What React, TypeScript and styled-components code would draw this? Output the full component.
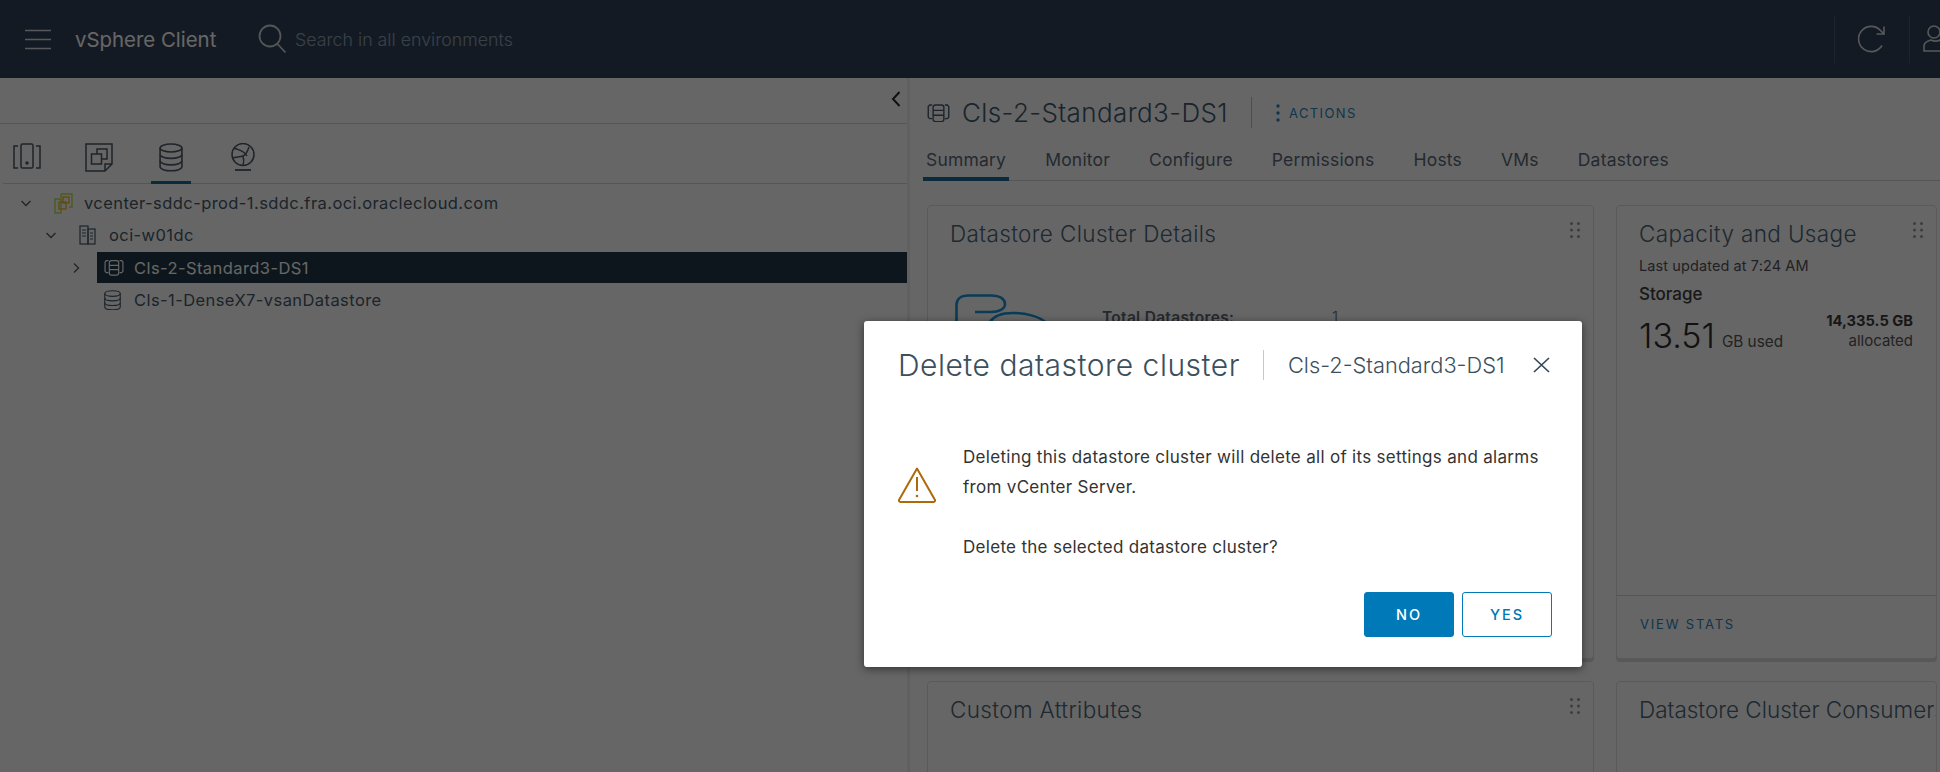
import styled, { createGlobalStyle } from 'styled-components';

const font = `Inter, "Open Sans", "Liberation Sans", sans-serif`;

const GlobalStyle = createGlobalStyle`
  html, body {
    margin: 0;
    width: 1940px;
    height: 772px;
    overflow: hidden;
    background: #fff;
    font-family: ${font};
  }
  * { box-sizing: border-box; }
  svg { flex-shrink: 0; }
`;

const TABS = ['Summary', 'Monitor', 'Configure', 'Permissions', 'Hosts', 'VMs', 'Datastores'];

const HamburgerIcon = () => (
  <svg width="26" height="21" viewBox="0 0 26 21" fill="none" stroke="currentColor" strokeWidth="1.6">
    <path d="M0 1.5h26M0 10.5h26M0 19.5h26" />
  </svg>
);

const SearchIcon = () => (
  <svg width="30" height="30" viewBox="0 0 30 30" fill="none" stroke="currentColor" strokeWidth="1.8">
    <circle cx="13" cy="12" r="10.5" />
    <path d="M20.5 20l8 8.5" />
  </svg>
);

const RefreshIcon = () => (
  <svg width="30" height="30" viewBox="0 0 30 30" fill="none" stroke="currentColor" strokeWidth="1.6">
    <path d="M25 21.5A12.6 12.6 0 1 1 23.5 6.5L27 10" />
    <path d="M27 2.5V10h-7.5" />
  </svg>
);

const UserIcon = () => (
  <svg width="30" height="28" viewBox="0 0 30 28" fill="none" stroke="currentColor" strokeWidth="1.6">
    <circle cx="11" cy="7" r="6" />
    <path d="M1 26v-5c0-3 3-5 7-6 3 1.500 6 1.500 9 0 4 1 8 3 8 6v5z" />
  </svg>
);

const HostsIcon = () => (
  <svg width="28" height="26" viewBox="0 0 28 26" fill="none" stroke="currentColor" strokeWidth="1.5">
    <path d="M5 3H1v22h4M23 3h4v22h-4" />
    <rect x="8" y="1" width="12" height="24" rx="1.5" />
    <circle cx="14" cy="20" r="1" fill="currentColor" />
  </svg>
);

const VmsIcon = () => (
  <svg width="28" height="29" viewBox="0 0 28 29" fill="none" stroke="currentColor" strokeWidth="1.5">
    <path d="M1 1h26v20l-7 7H1zM27 21h-7v7" />
    <rect x="12" y="6" width="10" height="10" />
    <rect x="6.500" y="11" width="10" height="10" fill="#fff" />
  </svg>
);

const DatabaseIcon = ({ size = 24 }: { size?: number }) => (
  <svg width={size} height={size * 1.2} viewBox="0 0 24 29" fill="none" stroke="currentColor" strokeWidth="1.6">
    <ellipse cx="12" cy="5" rx="11" ry="4" />
    <path d="M1 5v19c0 2.300 5 4 11 4s11-1.700 11-4V5" />
    <path d="M1 11.500c0 2.300 5 4 11 4s11-1.700 11-4M1 18c0 2.300 5 4 11 4s11-1.700 11-4" />
  </svg>
);

const NetworkIcon = () => (
  <svg width="24" height="28" viewBox="0 0 24 28" fill="none" stroke="currentColor" strokeWidth="1.5">
    <circle cx="12" cy="11.500" r="11" />
    <path d="M3 5c4 2 10 2 13 8M1.500 15c4-1 8-1 10.500-2s5-6 6-9M12 13c1 3 1 6 0 9" />
    <path d="M4 27h16" strokeWidth="1.800" />
  </svg>
);

const VcenterIcon = () => (
  <svg width="19" height="21" viewBox="0 0 19 21" fill="none" strokeWidth="1.4">
    <path d="M7 1h11v13h-3M7 1v4" stroke="#b9e25a" />
    <path d="M1 6h6v14H1z" stroke="#b9e25a" />
    <rect x="5" y="9" width="7" height="7" stroke="#f0c020" />
    <rect x="9" y="4" width="6" height="6" stroke="#f0c020" />
  </svg>
);

const DatacenterIcon = () => (
  <svg width="17" height="20" viewBox="0 0 17 20" fill="none" stroke="currentColor" strokeWidth="1.2">
    <rect x="1" y="1" width="8" height="18" />
    <rect x="9" y="4" width="7" height="15" />
    <path d="M3 5h4M3 8h4M3 11h4M11 8h3M11 11h3M11 14h3" />
  </svg>
);

const ClusterIcon = ({ width = 20 }: { width?: number }) => (
  <svg width={width} height={width * 0.85} viewBox="0 0 23 20" fill="none" stroke="currentColor" strokeWidth="1.4">
    <path d="M5 2H2.500L1 3.500v11L2.500 16H5M18 2h2.500L22 3.500v11L20.500 16H18" />
    <rect x="6" y="2" width="11" height="17" rx="2.500" />
    <path d="M6 7.500h11M6 12.500h11" />
  </svg>
);

const DotsVertical = () => (
  <svg width="4" height="18" viewBox="0 0 4 18" fill="currentColor">
    <circle cx="2" cy="2" r="1.700" />
    <circle cx="2" cy="9" r="1.700" />
    <circle cx="2" cy="16" r="1.700" />
  </svg>
);

const DragHandle = () => (
  <svg width="10" height="16" viewBox="0 0 10 16" fill="currentColor">
    {[1.5, 8, 14.500].flatMap(y => [1.500, 8.500].map(x => <circle key={`${x}-${y}`} cx={x} cy={y} r="1.500" />))}
  </svg>
);

const Chevron = ({ open }: { open: boolean }) => (
  <svg width="12" height="12" viewBox="0 0 12 12" fill="none" stroke="currentColor" strokeWidth="1.3">
    <path d={open ? 'M1.500 4l4.500 4.500L10.500 4' : 'M4 1.500L8.500 6 4 10.500'} />
  </svg>
);

const CloudyStorageIcon = () => (
  <svg width="96" height="60" viewBox="0 0 96 60" fill="none" stroke="#1b96d8" strokeWidth="2.600">
    <path d="M1.500 60V11C1.500 5 6 1.500 13 1.500H36C45 1.500 50 5 50 10C50 15 44 18 36 18L20 18" />
    <path d="M35 28C40 20 50 19 58 19C72 19 85 23 90 28" />
  </svg>
);

const WarningIcon = () => (
  <svg width="38" height="36" viewBox="0 0 38 36" fill="none" stroke="#ad6a0a" strokeWidth="2">
    <path d="M19 1.500L37 33a1.500 1.500 0 0 1-1.300 2H2.300A1.500 1.500 0 0 1 1 33z" strokeLinejoin="round" />
    <path d="M19 10v14" />
    <circle cx="19" cy="29" r="1.300" fill="#ad6a0a" stroke="none" />
  </svg>
);

const CloseIcon = () => (
  <svg width="17" height="16" viewBox="0 0 17 16" fill="none" stroke="#33495a" strokeWidth="1.700">
    <path d="M1 1l15 14M16 1L1 15" />
  </svg>
);

const ScrollChevron = () => (
  <svg width="10" height="16" viewBox="0 0 10 16" fill="none" stroke="currentColor" strokeWidth="2">
    <path d="M8.500 1L2 8l6.500 7" />
  </svg>
);

const App = () => {
  return (
    <Page>
      <GlobalStyle />
      <Header>
        <MenuButton>
          <HamburgerIcon />
        </MenuButton>
        <Brand>vSphere Client</Brand>
        <SearchBox>
          <SearchIcon />
          <Placeholder>Search in all environments</Placeholder>
        </SearchBox>
        <HeaderAction>
          <RefreshIcon />
        </HeaderAction>
        <HeaderAction $clip>
          <UserIcon />
        </HeaderAction>
      </Header>

      <Body>
        <LeftPane>
          <CollapseBar>
            <ScrollChevron />
          </CollapseBar>
          <NavTabs>
            <NavTab $left={13} $w={28}>
              <HostsIcon />
            </NavTab>
            <NavTab $left={85} $w={28}>
              <VmsIcon />
            </NavTab>
            <NavTab $left={151} $w={40} $active>
              <DatabaseIcon />
            </NavTab>
            <NavTab $left={231} $w={24}>
              <NetworkIcon />
            </NavTab>
          </NavTabs>
          <Tree>
            <TreeRow $level={0}>
              <Caret>
                <Chevron open />
              </Caret>
              <TreeLabel>
                <TreeIcon>
                  <VcenterIcon />
                </TreeIcon>
                vcenter-sddc-prod-1.sddc.fra.oci.oraclecloud.com
              </TreeLabel>
            </TreeRow>
            <TreeRow $level={1}>
              <Caret>
                <Chevron open />
              </Caret>
              <TreeLabel>
                <TreeIcon>
                  <DatacenterIcon />
                </TreeIcon>
                oci-w01dc
              </TreeLabel>
            </TreeRow>
            <TreeRow $level={2}>
              <Caret>
                <Chevron open={false} />
              </Caret>
              <TreeLabel $selected>
                <TreeIcon>
                  <ClusterIcon />
                </TreeIcon>
                Cls-2-Standard3-DS1
              </TreeLabel>
            </TreeRow>
            <TreeRow $level={2}>
              <Caret />
              <TreeLabel>
                <TreeIcon>
                  <DatabaseIcon size={17} />
                </TreeIcon>
                Cls-1-DenseX7-vsanDatastore
              </TreeLabel>
            </TreeRow>
          </Tree>
        </LeftPane>

        <RightPane>
          <TitleRow>
            <ClusterIcon width={23} />
            <ObjectTitle>Cls-2-Standard3-DS1</ObjectTitle>
            <ActionsLink>
              <DotsVertical />
              ACTIONS
            </ActionsLink>
          </TitleRow>
          <TabBar>
            {TABS.map((tab, i) => (
              <Tab key={tab} $active={i === 0}>
                {tab}
              </Tab>
            ))}
          </TabBar>

          <Cards>
            <Card>
              <CardHead>
                <CardTitle>Datastore Cluster Details</CardTitle>
                <HandleWrap>
                  <DragHandle />
                </HandleWrap>
              </CardHead>
              <DetailRow>
                <CloudyStorageIcon />
                <DetailKey>Total Datastores:</DetailKey>
                <DetailValue>1</DetailValue>
              </DetailRow>
            </Card>

            <Card>
              <CardHead>
                <CardTitle>Capacity and Usage</CardTitle>
                <HandleWrap>
                  <DragHandle />
                </HandleWrap>
              </CardHead>
              <CardBody>
                <Updated>Last updated at 7:24 AM</Updated>
                <StorageLabel>Storage</StorageLabel>
                <UsageRow>
                  <UsedValue>13.51</UsedValue>
                  <UsedUnit>GB used</UsedUnit>
                  <Allocated>
                    <strong>14,335.5 GB</strong>
                    <span>allocated</span>
                  </Allocated>
                </UsageRow>
              </CardBody>
              <CardFooter>
                <FooterLink>VIEW STATS</FooterLink>
              </CardFooter>
            </Card>

            <Card>
              <CardHead>
                <CardTitle>Custom Attributes</CardTitle>
                <HandleWrap>
                  <DragHandle />
                </HandleWrap>
              </CardHead>
            </Card>

            <Card>
              <CardHead>
                <CardTitle $tight>Datastore Cluster Consumers</CardTitle>
              </CardHead>
            </Card>
          </Cards>
        </RightPane>
      </Body>

      <Backdrop />

      <Modal>
        <ModalHead>
          <ModalTitle>Delete datastore cluster</ModalTitle>
          <ModalSubtitle>Cls-2-Standard3-DS1</ModalSubtitle>
          <CloseButton>
            <CloseIcon />
          </CloseButton>
        </ModalHead>
        <ModalBody>
          <WarningWrap>
            <WarningIcon />
          </WarningWrap>
          <Message>
            <p>Deleting this datastore cluster will delete all of its settings and alarms from vCenter Server.</p>
            <p>Delete the selected datastore cluster?</p>
          </Message>
        </ModalBody>
        <ModalFooter>
          <Button $primary>NO</Button>
          <Button>YES</Button>
        </ModalFooter>
      </Modal>
    </Page>
  );
};

const Page = styled.div`
  position: relative;
  width: 1940px;
  height: 772px;
  overflow: hidden;
  display: flex;
  flex-direction: column;
  background: #fff;
  color: #47596a;
  font-weight: 300;
`;

/* header */
const Header = styled.header`
  flex: 0 0 78px;
  display: flex;
  align-items: center;
  padding-left: 25px;
  background: #344358;
  color: #d8dde0;
`;
const MenuButton = styled.div`
  display: flex;
  width: 50px;
`;
const Brand = styled.div`
  width: 182px;
  font-size: 20.400px;
  font-weight: 400;
  color: #fff;
`;
const SearchBox = styled.div`
  flex: 1;
  display: flex;
  align-items: center;
  gap: 8px;
  color: #d0d5d8;
`;
const Placeholder = styled.span`
  font-size: 17.800px;
  color: #8da3b6;
`;
const HeaderAction = styled.div<{ $clip?: boolean }>`
  flex: 0 0 ${({ $clip }) => ($clip ? 31 : 75)}px;
  height: 48px;
  display: flex;
  align-items: center;
  justify-content: ${({ $clip }) => ($clip ? 'flex-start' : 'center')};
  padding-left: ${({ $clip }) => ($clip ? 13 : 0)}px;
  border-left: 1px solid #465a72;
  overflow: hidden;
`;

/* left tree */
const Body = styled.div`
  flex: 1;
  display: flex;
  min-height: 0;
`;
const LeftPane = styled.aside`
  flex: 0 0 910px;
  border-right: 3px solid #f0f0f0;
`;
const CollapseBar = styled.div`
  height: 46px;
  display: flex;
  align-items: center;
  justify-content: flex-end;
  padding: 0 6px 4px 0;
  border-bottom: 1px solid #d4d4d4;
  color: #222c35;
`;
const NavTabs = styled.div`
  position: relative;
  height: 60px;
  margin-left: 3px;
  border-bottom: 1px solid #d4d4d4;
  color: #4d5b66;
`;
const NavTab = styled.div<{ $left: number; $w: number; $active?: boolean }>`
  position: absolute;
  left: ${({ $left }) => $left - 3}px;
  top: 19px;
  bottom: -1px;
  width: ${({ $w }) => $w}px;
  display: flex;
  justify-content: center;
  border-bottom: 3px solid ${({ $active }) => ($active ? '#1a6d96' : 'transparent')};
`;
const Tree = styled.div`
  padding-top: 3px;
`;
const TreeRow = styled.div<{ $level: number }>`
  height: 32.300px;
  display: flex;
  align-items: center;
  gap: 11px;
  padding-left: ${({ $level }) => 16 + $level * 25}px;
  color: #4d5b66;
`;
const Caret = styled.span`
  flex: 0 0 20px;
  display: flex;
  justify-content: center;
`;
const TreeLabel = styled.div<{ $selected?: boolean }>`
  flex: 1;
  height: ${({ $selected }) => ($selected ? 31 : 32)}px;
  display: flex;
  align-items: center;
  padding-left: 7px;
  font-size: 16.500px;
  font-weight: 400;
  letter-spacing: 0.420px;
  background: ${({ $selected }) => ($selected ? '#213746' : 'transparent')};
  color: ${({ $selected }) => ($selected ? '#fff' : '#465a6b')};
`;
const TreeIcon = styled.span`
  flex: 0 0 30px;
  display: flex;
  align-items: center;
`;

/* right summary */
const RightPane = styled.main`
  flex: 1;
  min-width: 0;
  overflow: hidden;
`;
const TitleRow = styled.div`
  height: 59px;
  display: flex;
  align-items: center;
  padding: 10px 0 0 17px;
`;
const ObjectTitle = styled.h1`
  margin: 0 0 0 12px;
  padding-right: 23px;
  height: 31px;
  border-right: 1px solid #c0c0c0;
  font-size: 26px;
  line-height: 31px;
  font-weight: 300;
  letter-spacing: 0.400px;
  white-space: nowrap;
  color: #3f5a70;
`;
const ActionsLink = styled.div`
  display: flex;
  align-items: center;
  gap: 9px;
  margin-left: 24px;
  font-size: 13px;
  font-weight: 400;
  letter-spacing: 1.400px;
  color: #2a86bd;
`;
const TabBar = styled.nav`
  height: 44px;
  display: flex;
  gap: 39px;
  margin-left: 13px;
  padding-left: 3px;
  border-bottom: 1px solid #d4d4d4;
`;
const Tab = styled.div<{ $active: boolean }>`
  height: 44px;
  margin: 0 ${({ $active }) => ($active ? '-3px' : '0')};
  padding: 12px ${({ $active }) => ($active ? '3px' : '0')} 0;
  border-bottom: 4px solid ${({ $active }) => ($active ? '#1a6d96' : 'transparent')};
  font-size: 17.500px;
  font-weight: 400;
  letter-spacing: 0.200px;
  color: #5a6a78;
`;
const Cards = styled.div`
  display: grid;
  grid-template-columns: 667px 321px;
  grid-auto-rows: 454px;
  gap: 22px;
  padding: 24px 0 0 17px;
`;
const Card = styled.section`
  display: flex;
  flex-direction: column;
  min-width: 0;
  border: 1px solid #e2e2e2;
  border-radius: 4px;
  box-shadow: 0 3px 0 #dcdcdc;
  overflow: hidden;
  background: #fff;
`;
const CardHead = styled.div`
  display: flex;
  justify-content: space-between;
  padding: 13px 13px 0 22px;
`;
const CardTitle = styled.h2<{ $tight?: boolean }>`
  margin: 0;
  font-size: 22.500px;
  line-height: 30px;
  font-weight: 300;
  letter-spacing: ${({ $tight }) => ($tight ? 0 : 0.36)}px;
  white-space: nowrap;
  color: #4d6678;
`;
const HandleWrap = styled.div`
  padding-top: 3px;
  color: #9a9a9a;
`;
const DetailRow = styled.div`
  display: flex;
  align-items: flex-start;
  margin: 45px 0 0 27px;
`;
const DetailKey = styled.div`
  width: 230px;
  margin: 14px 0 0 51px;
  font-size: 15.500px;
  font-weight: 600;
  letter-spacing: 0.300px;
  color: #5c6770;
`;
const DetailValue = styled.div`
  margin-top: 14px;
  font-size: 15.500px;
  color: #5c6770;
`;
const CardBody = styled.div`
  flex: 1;
  padding: 7px 23px 0 22px;
`;
const Updated = styled.div`
  font-size: 14.500px;
  line-height: 20px;
  font-weight: 400;
  letter-spacing: 0.100px;
  color: #55525a;
`;
const StorageLabel = styled.div`
  margin-top: 8px;
  font-size: 17px;
  line-height: 20px;
  font-weight: 500;
  color: #3e3e3e;
`;
const UsageRow = styled.div`
  display: flex;
  align-items: flex-start;
  margin-top: 10px;
`;
const UsedValue = styled.span`
  font-size: 34px;
  line-height: 44px;
  font-weight: 300;
  color: #2e2e2e;
`;
const UsedUnit = styled.span`
  margin: 18px 0 0 7px;
  font-size: 15.300px;
  font-weight: 400;
  color: #565656;
`;
const Allocated = styled.div`
  margin: -2px 0 0 auto;
  display: flex;
  flex-direction: column;
  align-items: flex-end;
  font-size: 15px;
  line-height: 19px;
  color: #565656;
  font-weight: 400;
  strong {
    font-size: 14.700px;
    font-weight: 700;
    color: #3a3a3a;
  }
`;
const CardFooter = styled.div`
  height: 63px;
  padding: 17px 0 0 23px;
  border-top: 1px solid #d4d4d4;
`;
const FooterLink = styled.span`
  font-size: 13px;
  line-height: 18px;
  font-weight: 400;
  letter-spacing: 1.800px;
  color: #2a86bd;
`;

/* modal */
const Backdrop = styled.div`
  position: absolute;
  inset: 0;
  background: rgba(0, 0, 0, 0.6);
`;
const Modal = styled.div`
  position: absolute;
  left: 864px;
  top: 321px;
  width: 718px;
  height: 346px;
  display: flex;
  flex-direction: column;
  padding: 0 30px 30px 34px;
  background: #fff;
  border-radius: 3px;
  box-shadow: 0 2px 8px rgba(0, 0, 0, 0.5);
`;
const ModalHead = styled.div`
  display: flex;
  align-items: center;
  height: 88px;
`;
const ModalTitle = styled.h3`
  margin: 0;
  padding-right: 23px;
  border-right: 1px solid #c8c8c8;
  font-size: 30px;
  line-height: 30px;
  font-weight: 300;
  letter-spacing: 0.500px;
  white-space: nowrap;
  color: #3c4f5c;
`;
const ModalSubtitle = styled.div`
  margin-left: 24px;
  font-size: 21.800px;
  font-weight: 300;
  white-space: nowrap;
  color: #3c4f5c;
`;
const CloseButton = styled.div`
  margin-left: auto;
  margin-right: 2px;
  display: flex;
`;
const ModalBody = styled.div`
  flex: 1;
  display: flex;
  padding-top: 33px;
`;
const WarningWrap = styled.div`
  flex: 0 0 65px;
  padding-top: 25px;
`;
const Message = styled.div`
  width: 586px;
  font-size: 17px;
  line-height: 30px;
  font-weight: 400;
  letter-spacing: 0.300px;
  color: #333;
  p {
    margin: 0 0 30px;
  }
`;
const ModalFooter = styled.div`
  display: flex;
  justify-content: flex-end;
  gap: 8px;
`;
const Button = styled.div<{ $primary?: boolean }>`
  width: 90px;
  height: 45px;
  display: flex;
  align-items: center;
  justify-content: center;
  border: 1px solid #0079b8;
  border-radius: 3px;
  background: ${({ $primary }) => ($primary ? '#0079b8' : '#fff')};
  color: ${({ $primary }) => ($primary ? '#fff' : '#0079b8')};
  font-size: 14.500px;
  font-weight: 500;
  letter-spacing: 2px;
`;

export default App;
